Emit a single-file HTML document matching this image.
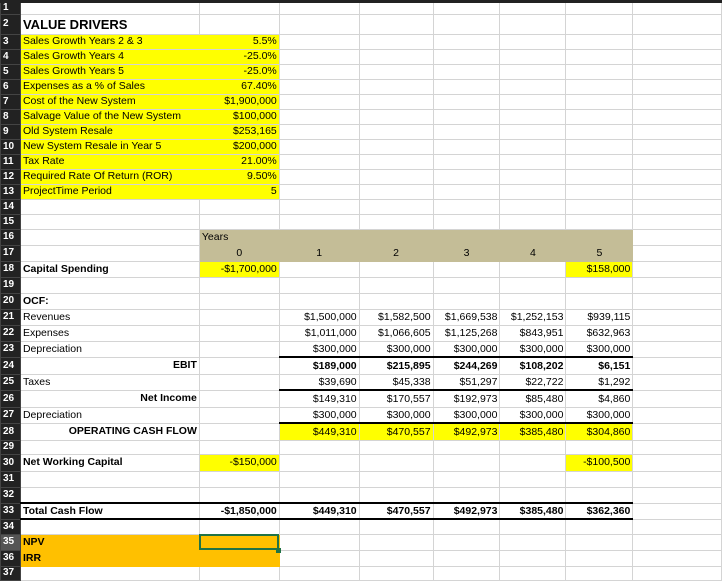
<!DOCTYPE html>
<html><head><meta charset="utf-8"><style>
body{margin:0;width:722px;height:579px;overflow:hidden;background:#fff;font-family:"Liberation Sans",Arial,sans-serif;font-size:10.5px;color:#000}
table{border-collapse:collapse;table-layout:fixed;position:absolute;left:0;top:0}
td{border:1px solid #d4d4d4;padding:0 2px;white-space:nowrap;overflow:hidden;line-height:1;text-align:right}
td.h{background:#222;color:#fff;font-weight:bold;text-align:left;padding:0 0 0 2px;border-color:#444;font-size:10px}
td.l{text-align:left}
td.c{text-align:center}
.y{background:#ffff00}
td.t{background:#c4bd97;border-color:#c4bd97}
.o{background:#ffc000}
.b{font-weight:bold}
.bb{border-bottom:2px solid #000}
.sel{outline:2px solid #217346;outline-offset:-2px}
</style></head><body>
<div style="position:absolute;left:0;top:0;width:722px;height:3px;background:#222;z-index:2"></div>
<table>
<colgroup><col style="width:20px"><col style="width:179px"><col style="width:80px"><col style="width:80px"><col style="width:74px"><col style="width:67px"><col style="width:66px"><col style="width:67px"><col style="width:89px"></colgroup>
<tr style="height:13px"><td class="h">1</td><td></td><td style="border-top:2px solid #217346"></td><td></td><td></td><td></td><td></td><td></td><td></td></tr>
<tr style="height:20px"><td class="h">2</td><td class="l b" style="font-size:13px">VALUE DRIVERS</td><td></td><td></td><td></td><td></td><td></td><td></td><td></td></tr>
<tr style="height:15px"><td class="h">3</td><td class="l y" style="border-right:0">Sales Growth Years 2 &amp; 3</td><td class="y" style="border-left:0">5.5%</td><td></td><td></td><td></td><td></td><td></td><td></td></tr>
<tr style="height:15px"><td class="h">4</td><td class="l y" style="border-right:0">Sales Growth Years 4</td><td class="y" style="border-left:0">-25.0%</td><td></td><td></td><td></td><td></td><td></td><td></td></tr>
<tr style="height:15px"><td class="h">5</td><td class="l y" style="border-right:0">Sales Growth Years 5</td><td class="y" style="border-left:0">-25.0%</td><td></td><td></td><td></td><td></td><td></td><td></td></tr>
<tr style="height:15px"><td class="h">6</td><td class="l y" style="border-right:0">Expenses as a % of Sales</td><td class="y" style="border-left:0">67.40%</td><td></td><td></td><td></td><td></td><td></td><td></td></tr>
<tr style="height:15px"><td class="h">7</td><td class="l y" style="border-right:0">Cost of the New System</td><td class="y" style="border-left:0">$1,900,000</td><td></td><td></td><td></td><td></td><td></td><td></td></tr>
<tr style="height:15px"><td class="h">8</td><td class="l y" style="border-right:0">Salvage Value of the New System</td><td class="y" style="border-left:0">$100,000</td><td></td><td></td><td></td><td></td><td></td><td></td></tr>
<tr style="height:15px"><td class="h">9</td><td class="l y" style="border-right:0">Old System Resale</td><td class="y" style="border-left:0">$253,165</td><td></td><td></td><td></td><td></td><td></td><td></td></tr>
<tr style="height:15px"><td class="h">10</td><td class="l y" style="border-right:0">New System Resale in Year 5</td><td class="y" style="border-left:0">$200,000</td><td></td><td></td><td></td><td></td><td></td><td></td></tr>
<tr style="height:15px"><td class="h">11</td><td class="l y" style="border-right:0">Tax Rate</td><td class="y" style="border-left:0">21.00%</td><td></td><td></td><td></td><td></td><td></td><td></td></tr>
<tr style="height:15px"><td class="h">12</td><td class="l y" style="border-right:0">Required Rate Of Return (ROR)</td><td class="y" style="border-left:0">9.50%</td><td></td><td></td><td></td><td></td><td></td><td></td></tr>
<tr style="height:15px"><td class="h">13</td><td class="l y" style="border-right:0">ProjectTime Period</td><td class="y" style="border-left:0">5</td><td></td><td></td><td></td><td></td><td></td><td></td></tr>
<tr style="height:15px"><td class="h">14</td><td></td><td></td><td></td><td></td><td></td><td></td><td></td><td></td></tr>
<tr style="height:15px"><td class="h">15</td><td></td><td></td><td></td><td></td><td></td><td></td><td></td><td></td></tr>
<tr style="height:16px"><td class="h">16</td><td></td><td class="l t">Years</td><td class="t"></td><td class="t"></td><td class="t"></td><td class="t"></td><td class="t"></td><td></td></tr>
<tr style="height:16px"><td class="h">17</td><td></td><td class="c t">0</td><td class="c t">1</td><td class="c t">2</td><td class="c t">3</td><td class="c t">4</td><td class="c t">5</td><td></td></tr>
<tr style="height:16px"><td class="h">18</td><td class="l b">Capital Spending</td><td class="y">-$1,700,000</td><td></td><td></td><td></td><td></td><td class="y">$158,000</td><td></td></tr>
<tr style="height:16px"><td class="h">19</td><td></td><td></td><td></td><td></td><td></td><td></td><td></td><td></td></tr>
<tr style="height:16px"><td class="h">20</td><td class="l b">OCF:</td><td></td><td></td><td></td><td></td><td></td><td></td><td></td></tr>
<tr style="height:16px"><td class="h">21</td><td class="l">Revenues</td><td></td><td>$1,500,000</td><td>$1,582,500</td><td>$1,669,538</td><td>$1,252,153</td><td>$939,115</td><td></td></tr>
<tr style="height:16px"><td class="h">22</td><td class="l">Expenses</td><td></td><td>$1,011,000</td><td>$1,066,605</td><td>$1,125,268</td><td>$843,951</td><td>$632,963</td><td></td></tr>
<tr style="height:16px"><td class="h">23</td><td class="l">Depreciation</td><td></td><td class="bb">$300,000</td><td class="bb">$300,000</td><td class="bb">$300,000</td><td class="bb">$300,000</td><td class="bb">$300,000</td><td></td></tr>
<tr style="height:17px"><td class="h">24</td><td class="b">EBIT</td><td></td><td class="b">$189,000</td><td class="b">$215,895</td><td class="b">$244,269</td><td class="b">$108,202</td><td class="b">$6,151</td><td></td></tr>
<tr style="height:16px"><td class="h">25</td><td class="l">Taxes</td><td></td><td class="bb">$39,690</td><td class="bb">$45,338</td><td class="bb">$51,297</td><td class="bb">$22,722</td><td class="bb">$1,292</td><td></td></tr>
<tr style="height:17px"><td class="h">26</td><td class="b">Net Income</td><td></td><td>$149,310</td><td>$170,557</td><td>$192,973</td><td>$85,480</td><td>$4,860</td><td></td></tr>
<tr style="height:16px"><td class="h">27</td><td class="l">Depreciation</td><td></td><td class="bb">$300,000</td><td class="bb">$300,000</td><td class="bb">$300,000</td><td class="bb">$300,000</td><td class="bb">$300,000</td><td></td></tr>
<tr style="height:17px"><td class="h">28</td><td class="b">OPERATING CASH FLOW</td><td></td><td class="y">$449,310</td><td class="y">$470,557</td><td class="y">$492,973</td><td class="y">$385,480</td><td class="y">$304,860</td><td></td></tr>
<tr style="height:14px"><td class="h">29</td><td></td><td></td><td></td><td></td><td></td><td></td><td></td><td></td></tr>
<tr style="height:17px"><td class="h">30</td><td class="l b">Net Working Capital</td><td class="y">-$150,000</td><td></td><td></td><td></td><td></td><td class="y">-$100,500</td><td></td></tr>
<tr style="height:16px"><td class="h">31</td><td></td><td></td><td></td><td></td><td></td><td></td><td></td><td></td></tr>
<tr style="height:16px"><td class="h">32</td><td class="bb"></td><td class="bb"></td><td class="bb"></td><td class="bb"></td><td class="bb"></td><td class="bb"></td><td class="bb"></td><td></td></tr>
<tr style="height:16px"><td class="h">33</td><td class="l b bb">Total Cash Flow</td><td class="b bb">-$1,850,000</td><td class="b bb">$449,310</td><td class="b bb">$470,557</td><td class="b bb">$492,973</td><td class="b bb">$385,480</td><td class="b bb">$362,360</td><td></td></tr>
<tr style="height:15px"><td class="h">34</td><td></td><td></td><td></td><td></td><td></td><td></td><td></td><td></td></tr>
<tr style="height:16px"><td class="h" style="background:#555">35</td><td class="l b o" style="border-color:#ffc000">NPV</td><td class="o sel" style="border-color:#ffc000"></td><td></td><td></td><td></td><td></td><td></td><td></td></tr>
<tr style="height:16px"><td class="h">36</td><td class="l b o" style="border-color:#ffc000">IRR</td><td class="o" style="border-color:#ffc000"></td><td></td><td></td><td></td><td></td><td></td><td></td></tr>
<tr style="height:14px"><td class="h">37</td><td></td><td></td><td></td><td></td><td></td><td></td><td></td><td></td></tr>
</table>
<div style="position:absolute;left:276px;top:548px;width:5px;height:5px;background:#217346"></div>
</body></html>
